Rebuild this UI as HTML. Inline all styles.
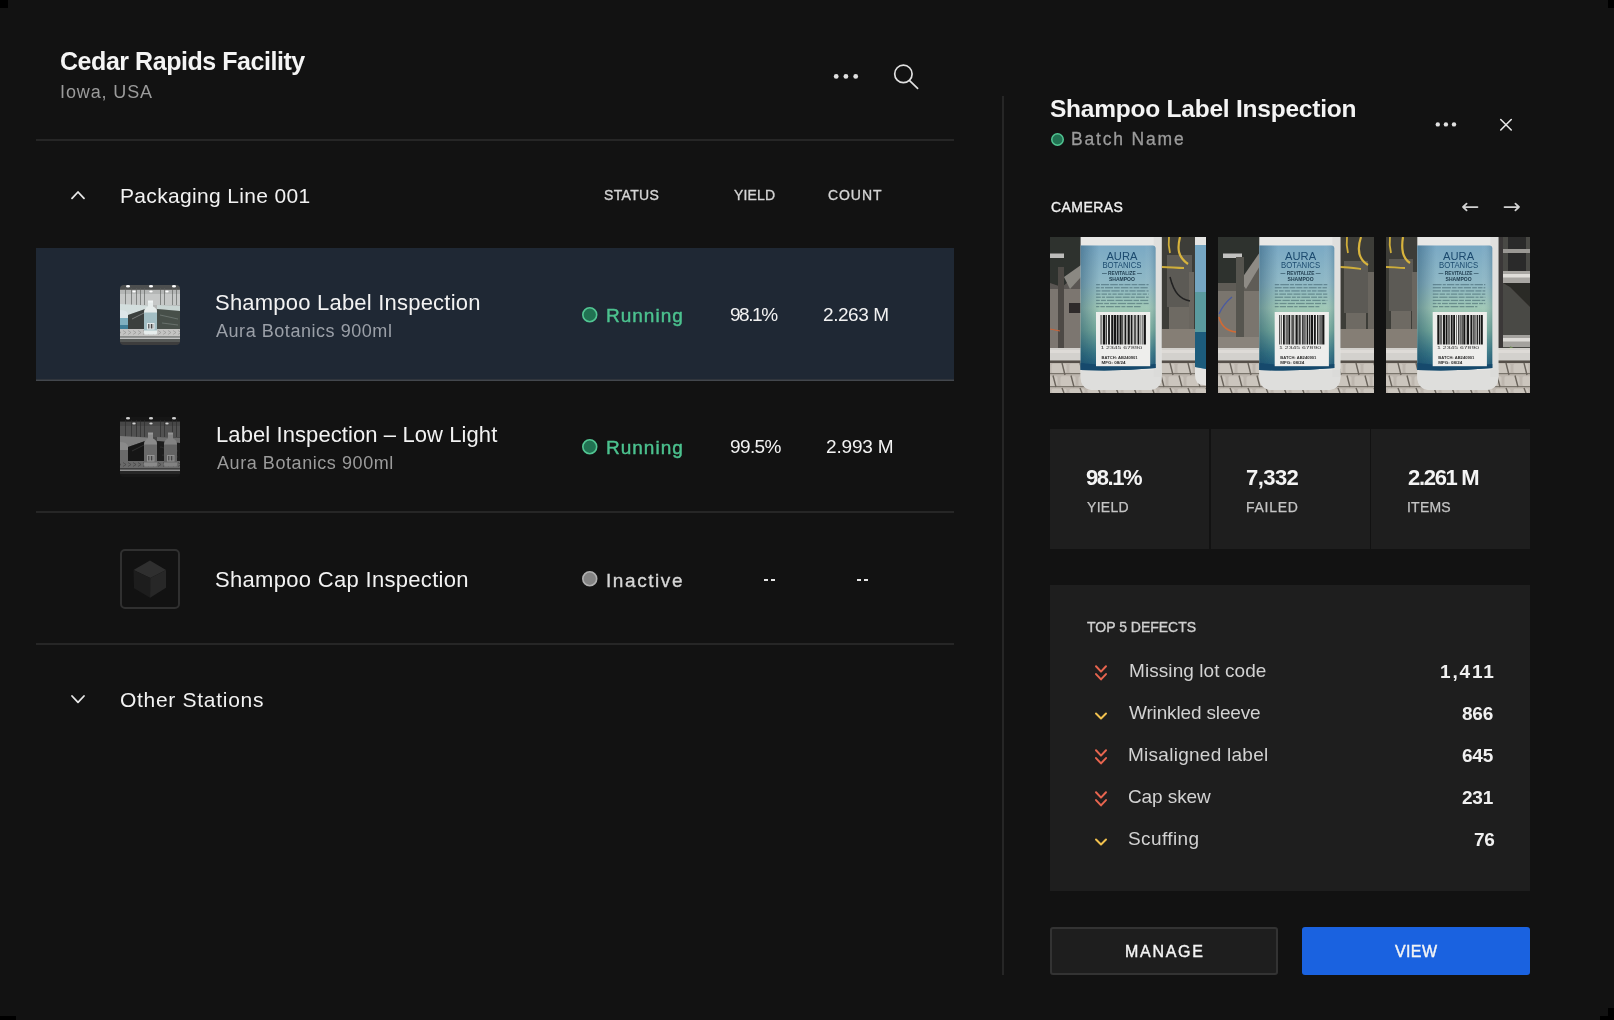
<!DOCTYPE html>
<html><head><meta charset="utf-8"><title>Cedar Rapids Facility</title>
<style>
html,body{margin:0;padding:0;}
body{width:1614px;height:1020px;overflow:hidden;background:#121212;position:relative;font-family:"Liberation Sans",sans-serif;}
.a{position:absolute;}
.t{position:absolute;white-space:nowrap;will-change:transform;}
</style></head><body>
<div class="a" style="left:0;top:0;width:8px;height:8px;background:#000"></div>
<div class="a" style="left:1608px;top:0;width:6px;height:8px;background:#000"></div>
<div class="a" style="left:0;top:1016px;width:16px;height:4px;background:#000"></div>
<div class="a" style="left:1608px;top:1008px;width:6px;height:12px;background:#000"></div>
<div class="a" style="left:1600px;top:1016px;width:14px;height:4px;background:#000"></div>
<div class="t" style="left:60.0px;top:48.5px;font-size:25px;line-height:25px;font-weight:700;letter-spacing:-0.45px;color:#f4f4f4;">Cedar Rapids Facility</div>
<div class="t" style="left:60.0px;top:82.5px;font-size:18px;line-height:18px;font-weight:400;letter-spacing:0.875px;color:#9b9b9b;">Iowa, USA</div>
<svg class="a" style="left:826px;top:66px" width="40" height="20" viewBox="0 0 40 20"><circle cx="10.2" cy="10.4" r="2.4" fill="#e0e0e0"/><circle cx="19.9" cy="10.4" r="2.4" fill="#e0e0e0"/><circle cx="29.7" cy="10.4" r="2.4" fill="#e0e0e0"/></svg>
<svg class="a" style="left:886px;top:56px" width="40" height="40" viewBox="0 0 40 40"><circle cx="17.4" cy="17.9" r="8.7" stroke="#e0e0e0" stroke-width="1.7" fill="none"/><path d="M23.6 24.6 L31.6 32.3" stroke="#e0e0e0" stroke-width="1.7" stroke-linecap="round"/></svg>
<div class="a" style="left:36px;top:139px;width:918px;height:2px;background:#262626"></div>
<svg class="a" style="left:66px;top:186px" width="24" height="18" viewBox="0 0 24 18"><path d="M6 12.3 L12 6 L18 12.3" stroke="#e8e8e8" stroke-width="1.8" fill="none" stroke-linecap="round" stroke-linejoin="round"/></svg>
<div class="t" style="left:120.2px;top:184.8px;font-size:21px;line-height:21px;font-weight:400;letter-spacing:0.33px;color:#f2f2f2;">Packaging Line 001</div>
<div class="t" style="left:603.7px;top:187.6px;font-size:14px;line-height:14px;font-weight:400;letter-spacing:0.34px;color:#d4d4d4;-webkit-text-stroke:0.35px #d4d4d4;">STATUS</div>
<div class="t" style="left:733.5px;top:187.6px;font-size:14px;line-height:14px;font-weight:400;letter-spacing:0.175px;color:#d4d4d4;-webkit-text-stroke:0.35px #d4d4d4;">YIELD</div>
<div class="t" style="left:828.3px;top:187.6px;font-size:14px;line-height:14px;font-weight:400;letter-spacing:0.925px;color:#d4d4d4;-webkit-text-stroke:0.35px #d4d4d4;">COUNT</div>
<div class="a" style="left:36px;top:248px;width:918px;height:131px;background:#1f2834"></div>
<div class="a" style="left:36px;top:379px;width:918px;height:1px;background:#30353c"></div>
<div class="a" style="left:36px;top:380px;width:918px;height:1px;background:#43474d"></div>
<div class="a" style="left:36px;top:511px;width:918px;height:2px;background:#262626"></div>
<div class="a" style="left:36px;top:643px;width:918px;height:2px;background:#262626"></div>
<div class="a" style="left:120px;top:285px;width:60px;height:60px;border-radius:4px;overflow:hidden"><svg width="60" height="60" viewBox="0 0 60 60" style="display:block"><defs><filter id="tb1" x="0" y="0" width="1" height="1"><feGaussianBlur stdDeviation="0.35"/></filter><linearGradient id="tb1g" x1="0" y1="0" x2="0" y2="1"><stop offset="0" stop-color="#5e6a6a"/><stop offset="1" stop-color="#2e3432"/></linearGradient></defs><g filter="url(#tb1)"><rect width="60" height="60" fill="#b4b6b5"/><rect x="0" y="0" width="60" height="4.5" fill="#4e5050"/><rect x="0" y="9" width="60" height="11" fill="#d2d4d3" opacity="0.6"/><rect x="5" y="3" width="0.9" height="17" fill="#5a5c5b" opacity="0.7"/><rect x="11" y="3" width="0.9" height="17" fill="#5a5c5b" opacity="0.7"/><rect x="16" y="3" width="0.9" height="17" fill="#5a5c5b" opacity="0.7"/><rect x="20" y="3" width="0.9" height="17" fill="#5a5c5b" opacity="0.7"/><rect x="24" y="3" width="0.9" height="17" fill="#5a5c5b" opacity="0.7"/><rect x="40" y="3" width="0.9" height="17" fill="#5a5c5b" opacity="0.7"/><rect x="44" y="3" width="0.9" height="17" fill="#5a5c5b" opacity="0.7"/><rect x="52" y="3" width="0.9" height="17" fill="#5a5c5b" opacity="0.7"/><rect x="56" y="3" width="0.9" height="17" fill="#5a5c5b" opacity="0.7"/><rect x="0" y="4" width="60" height="0.8" fill="#5a5c5b"/><ellipse cx="8" cy="1.2" rx="2.08" ry="1.2800000000000002" fill="#ffffff"/><ellipse cx="31" cy="1.2" rx="2.08" ry="1.2800000000000002" fill="#ffffff"/><ellipse cx="54" cy="1.2" rx="2.08" ry="1.2800000000000002" fill="#ffffff"/><ellipse cx="14" cy="6.5" rx="1.6900000000000002" ry="1.04" fill="#ffffff"/><ellipse cx="31" cy="6.5" rx="1.6900000000000002" ry="1.04" fill="#ffffff"/><ellipse cx="47" cy="6.5" rx="1.6900000000000002" ry="1.04" fill="#ffffff"/><path d="M0 19 L28 20.5 L28 23 L8 30 L0 33 Z" fill="#d3dedd"/><path d="M37 20 L60 21 L60 26 L37 24 Z" fill="#c9d5d3"/><path d="M0 33 L8 30 L28 23 L28 44 L0 44 Z" fill="#3a403e"/><path d="M37 24 L60 26 L60 44 L37 44 Z" fill="#46504a"/><path d="M12 34 L26 27" stroke="#b4b6b5" stroke-width="1" opacity="0.5"/><path d="M40 30 L58 34 M42 38 L58 40" stroke="#b4b6b5" stroke-width="0.8" opacity="0.4"/><path d="M0 25 Q7 25 8 29 V48 H0 Z" fill="#dde6e8"/><rect x="0" y="33" width="8" height="13" fill="#7fb0c0"/><rect x="0" y="40" width="8" height="6" fill="#3f7f98"/><rect x="0" y="44" width="60" height="7.5" fill="#c4c4c2"/><path d="M-2 45.5 L1 47.5 L-2 49.5" stroke="#7a7a78" stroke-width="0.6" opacity="0.7" fill="none"/><path d="M3 45.5 L6 47.5 L3 49.5" stroke="#7a7a78" stroke-width="0.6" opacity="0.7" fill="none"/><path d="M8 45.5 L11 47.5 L8 49.5" stroke="#7a7a78" stroke-width="0.6" opacity="0.7" fill="none"/><path d="M13 45.5 L16 47.5 L13 49.5" stroke="#7a7a78" stroke-width="0.6" opacity="0.7" fill="none"/><path d="M18 45.5 L21 47.5 L18 49.5" stroke="#7a7a78" stroke-width="0.6" opacity="0.7" fill="none"/><path d="M23 45.5 L26 47.5 L23 49.5" stroke="#7a7a78" stroke-width="0.6" opacity="0.7" fill="none"/><path d="M28 45.5 L31 47.5 L28 49.5" stroke="#7a7a78" stroke-width="0.6" opacity="0.7" fill="none"/><path d="M33 45.5 L36 47.5 L33 49.5" stroke="#7a7a78" stroke-width="0.6" opacity="0.7" fill="none"/><path d="M38 45.5 L41 47.5 L38 49.5" stroke="#7a7a78" stroke-width="0.6" opacity="0.7" fill="none"/><path d="M43 45.5 L46 47.5 L43 49.5" stroke="#7a7a78" stroke-width="0.6" opacity="0.7" fill="none"/><path d="M48 45.5 L51 47.5 L48 49.5" stroke="#7a7a78" stroke-width="0.6" opacity="0.7" fill="none"/><path d="M53 45.5 L56 47.5 L53 49.5" stroke="#7a7a78" stroke-width="0.6" opacity="0.7" fill="none"/><path d="M58 45.5 L61 47.5 L58 49.5" stroke="#7a7a78" stroke-width="0.6" opacity="0.7" fill="none"/><path d="M28 16 H33 V21.5 Q37 23 37 27 V48 Q37 49.5 35.5 49.5 H25.5 Q24 49.5 24 48 V27 Q24 23 28 21.5 Z" fill="#e6eceb"/><rect x="28" y="15.5" width="5" height="2" fill="#f0f4f4"/><rect x="24" y="27.5" width="13" height="18" fill="#a3bfc4"/><rect x="27" y="38" width="7.5" height="6.5" fill="#e4eaea"/><rect x="28" y="39" width="0.8" height="4.5" fill="#444"/><rect x="29.6" y="39" width="0.6" height="4.5" fill="#444"/><rect x="31" y="39" width="1" height="4.5" fill="#444"/><rect x="32.6" y="39" width="0.6" height="4.5" fill="#444"/><rect x="0" y="51.5" width="60" height="8.5" fill="#555856"/><rect x="0" y="52.5" width="60" height="1.4" fill="#cfd0cf"/><rect x="0" y="57" width="60" height="3" fill="#2c2c2c" opacity="0.6"/></g></svg></div>
<div class="t" style="left:215.4px;top:292.2px;font-size:22px;line-height:22px;font-weight:400;letter-spacing:0.213px;color:#f2f2f2;">Shampoo Label Inspection</div>
<div class="t" style="left:216.4px;top:321.6px;font-size:18px;line-height:18px;font-weight:400;letter-spacing:0.545px;color:#9ba0a8;">Aura Botanics 900ml</div>
<svg class="a" style="left:579.75px;top:305.25px" width="19.5" height="19.5" viewBox="0 0 19.5 19.5"><circle cx="9.75" cy="9.75" r="6.95" fill="#217252" stroke="#52c693" stroke-width="1.6"/></svg>
<div class="t" style="left:606.0px;top:305.8px;font-size:19px;line-height:19px;font-weight:400;letter-spacing:1.0px;color:#4cc28f;-webkit-text-stroke:0.45px #4cc28f;">Running</div>
<div class="t" style="left:730.2px;top:305.4px;font-size:19px;line-height:19px;font-weight:400;letter-spacing:-1.45px;color:#f2f2f2;">98.1%</div>
<div class="t" style="left:823.4px;top:305.4px;font-size:19px;line-height:19px;font-weight:400;letter-spacing:-0.433px;color:#f2f2f2;">2.263 M</div>
<div class="a" style="left:120px;top:417px;width:60px;height:60px;border-radius:4px;overflow:hidden"><svg width="60" height="60" viewBox="0 0 60 60" style="display:block"><defs><filter id="tb2" x="0" y="0" width="1" height="1"><feGaussianBlur stdDeviation="0.35"/></filter><linearGradient id="tb2g" x1="0" y1="0" x2="0" y2="1"><stop offset="0" stop-color="#2a2a2a"/><stop offset="1" stop-color="#121212"/></linearGradient></defs><g filter="url(#tb2)"><rect width="60" height="60" fill="#464646"/><rect x="0" y="0" width="60" height="4.5" fill="#161616"/><rect x="0" y="9" width="60" height="11" fill="#585858" opacity="0.6"/><rect x="5" y="3" width="0.9" height="17" fill="#2a2a2a" opacity="0.7"/><rect x="11" y="3" width="0.9" height="17" fill="#2a2a2a" opacity="0.7"/><rect x="16" y="3" width="0.9" height="17" fill="#2a2a2a" opacity="0.7"/><rect x="20" y="3" width="0.9" height="17" fill="#2a2a2a" opacity="0.7"/><rect x="24" y="3" width="0.9" height="17" fill="#2a2a2a" opacity="0.7"/><rect x="40" y="3" width="0.9" height="17" fill="#2a2a2a" opacity="0.7"/><rect x="44" y="3" width="0.9" height="17" fill="#2a2a2a" opacity="0.7"/><rect x="52" y="3" width="0.9" height="17" fill="#2a2a2a" opacity="0.7"/><rect x="56" y="3" width="0.9" height="17" fill="#2a2a2a" opacity="0.7"/><rect x="0" y="4" width="60" height="0.8" fill="#2a2a2a"/><ellipse cx="8" cy="1.2" rx="2.08" ry="1.2800000000000002" fill="#d0d0d0"/><ellipse cx="31" cy="1.2" rx="2.08" ry="1.2800000000000002" fill="#d0d0d0"/><ellipse cx="54" cy="1.2" rx="2.08" ry="1.2800000000000002" fill="#d0d0d0"/><ellipse cx="14" cy="6.5" rx="1.6900000000000002" ry="1.04" fill="#d0d0d0"/><ellipse cx="31" cy="6.5" rx="1.6900000000000002" ry="1.04" fill="#d0d0d0"/><ellipse cx="47" cy="6.5" rx="1.6900000000000002" ry="1.04" fill="#d0d0d0"/><path d="M0 19 L28 20.5 L28 23 L8 30 L0 33 Z" fill="#7e7e7e"/><path d="M37 20 L60 21 L60 26 L37 24 Z" fill="#6e6e6e"/><path d="M0 33 L8 30 L28 23 L28 44 L0 44 Z" fill="#181818"/><path d="M37 24 L60 26 L60 44 L37 44 Z" fill="#1e1e1e"/><path d="M12 34 L26 27" stroke="#464646" stroke-width="1" opacity="0.5"/><path d="M40 30 L58 34 M42 38 L58 40" stroke="#464646" stroke-width="0.8" opacity="0.4"/><path d="M0 25 Q7 25 8 29 V48 H0 Z" fill="#8a8a8a"/><rect x="0" y="33" width="8" height="13" fill="#6a6a6a"/><rect x="0" y="44" width="60" height="7.5" fill="#6a6a6a"/><path d="M-2 45.5 L1 47.5 L-2 49.5" stroke="#2e2e2e" stroke-width="0.6" opacity="0.7" fill="none"/><path d="M3 45.5 L6 47.5 L3 49.5" stroke="#2e2e2e" stroke-width="0.6" opacity="0.7" fill="none"/><path d="M8 45.5 L11 47.5 L8 49.5" stroke="#2e2e2e" stroke-width="0.6" opacity="0.7" fill="none"/><path d="M13 45.5 L16 47.5 L13 49.5" stroke="#2e2e2e" stroke-width="0.6" opacity="0.7" fill="none"/><path d="M18 45.5 L21 47.5 L18 49.5" stroke="#2e2e2e" stroke-width="0.6" opacity="0.7" fill="none"/><path d="M23 45.5 L26 47.5 L23 49.5" stroke="#2e2e2e" stroke-width="0.6" opacity="0.7" fill="none"/><path d="M28 45.5 L31 47.5 L28 49.5" stroke="#2e2e2e" stroke-width="0.6" opacity="0.7" fill="none"/><path d="M33 45.5 L36 47.5 L33 49.5" stroke="#2e2e2e" stroke-width="0.6" opacity="0.7" fill="none"/><path d="M38 45.5 L41 47.5 L38 49.5" stroke="#2e2e2e" stroke-width="0.6" opacity="0.7" fill="none"/><path d="M43 45.5 L46 47.5 L43 49.5" stroke="#2e2e2e" stroke-width="0.6" opacity="0.7" fill="none"/><path d="M48 45.5 L51 47.5 L48 49.5" stroke="#2e2e2e" stroke-width="0.6" opacity="0.7" fill="none"/><path d="M53 45.5 L56 47.5 L53 49.5" stroke="#2e2e2e" stroke-width="0.6" opacity="0.7" fill="none"/><path d="M58 45.5 L61 47.5 L58 49.5" stroke="#2e2e2e" stroke-width="0.6" opacity="0.7" fill="none"/><path d="M28 16 H33 V21.5 Q37 23 37 27 V48 Q37 49.5 35.5 49.5 H25.5 Q24 49.5 24 48 V27 Q24 23 28 21.5 Z" fill="#8a8a8a"/><rect x="28" y="15.5" width="5" height="2" fill="#9a9a9a"/><rect x="24" y="27.5" width="13" height="18" fill="#6a6a6a"/><rect x="27" y="38" width="7.5" height="6.5" fill="#959595"/><rect x="28" y="39" width="0.8" height="4.5" fill="#444"/><rect x="29.6" y="39" width="0.6" height="4.5" fill="#444"/><rect x="31" y="39" width="1" height="4.5" fill="#444"/><rect x="32.6" y="39" width="0.6" height="4.5" fill="#444"/><path d="M48 16 H53 V21.5 Q57 23 57 27 V48 Q57 49.5 55.5 49.5 H45.5 Q44 49.5 44 48 V27 Q44 23 48 21.5 Z" fill="#828282"/><rect x="48" y="15.5" width="5" height="2" fill="#949494"/><rect x="44" y="27.5" width="13" height="18" fill="#646464"/><rect x="47" y="38" width="7.5" height="6.5" fill="#8e8e8e"/><rect x="48" y="39" width="0.8" height="4.5" fill="#444"/><rect x="49.6" y="39" width="0.6" height="4.5" fill="#444"/><rect x="51" y="39" width="1" height="4.5" fill="#444"/><rect x="52.6" y="39" width="0.6" height="4.5" fill="#444"/><rect x="0" y="51.5" width="60" height="8.5" fill="#262626"/><rect x="0" y="52.5" width="60" height="1.4" fill="#9a9a9a"/><rect x="0" y="57" width="60" height="3" fill="#111111" opacity="0.6"/></g></svg></div>
<div class="t" style="left:216.0px;top:424.2px;font-size:22px;line-height:22px;font-weight:400;letter-spacing:0.09px;color:#f2f2f2;">Label Inspection – Low Light</div>
<div class="t" style="left:216.6px;top:453.8px;font-size:18px;line-height:18px;font-weight:400;letter-spacing:0.567px;color:#9b9b9b;">Aura Botanics 900ml</div>
<svg class="a" style="left:579.75px;top:437.25px" width="19.5" height="19.5" viewBox="0 0 19.5 19.5"><circle cx="9.75" cy="9.75" r="6.95" fill="#217252" stroke="#52c693" stroke-width="1.6"/></svg>
<div class="t" style="left:606.0px;top:437.8px;font-size:19px;line-height:19px;font-weight:400;letter-spacing:1.0px;color:#4cc28f;-webkit-text-stroke:0.45px #4cc28f;">Running</div>
<div class="t" style="left:729.5px;top:437.4px;font-size:19px;line-height:19px;font-weight:400;letter-spacing:-0.625px;color:#f2f2f2;">99.5%</div>
<div class="t" style="left:826.0px;top:437.4px;font-size:19px;line-height:19px;font-weight:400;letter-spacing:-0.167px;color:#f2f2f2;">2.993 M</div>
<div class="a" style="left:120px;top:549px;width:60px;height:60px;border-radius:5px;box-sizing:border-box;border:2px solid #303030"></div>
<svg class="a" style="left:120px;top:549px" width="60" height="60" viewBox="0 0 60 60"><path d="M30 11.5 L46 21 L30.3 29 L13.5 21 Z" fill="#2f2f2f"/><path d="M13.5 21 L30.3 29 L30.1 48.7 L14 39.3 Z" fill="#1d1d1d"/><path d="M46 21 L46 38.7 L30.1 48.7 L30.3 29 Z" fill="#272727"/></svg>
<div class="t" style="left:215.4px;top:569.2px;font-size:22px;line-height:22px;font-weight:400;letter-spacing:0.31px;color:#f2f2f2;">Shampoo Cap Inspection</div>
<svg class="a" style="left:579.75px;top:569.45px" width="19.5" height="19.5" viewBox="0 0 19.5 19.5"><circle cx="9.75" cy="9.75" r="6.95" fill="#838383" stroke="#b0b0b0" stroke-width="1.6"/></svg>
<div class="t" style="left:606.0px;top:570.6px;font-size:19px;line-height:19px;font-weight:400;letter-spacing:1.571px;color:#d6d6d6;-webkit-text-stroke:0.35px #d6d6d6;">Inactive</div>
<div class="a" style="left:763.5px;top:579px;width:4.7px;height:2px;background:#e6e6e6"></div>
<div class="a" style="left:770.5px;top:579px;width:4.7px;height:2px;background:#e6e6e6"></div>
<div class="a" style="left:856.5px;top:579px;width:4.7px;height:2px;background:#e6e6e6"></div>
<div class="a" style="left:863.5px;top:579px;width:4.7px;height:2px;background:#e6e6e6"></div>
<svg class="a" style="left:66px;top:690px" width="24" height="18" viewBox="0 0 24 18"><path d="M6 6 L12 12.3 L18 6" stroke="#e8e8e8" stroke-width="1.8" fill="none" stroke-linecap="round" stroke-linejoin="round"/></svg>
<div class="t" style="left:119.7px;top:689.4px;font-size:21px;line-height:21px;font-weight:400;letter-spacing:0.708px;color:#f2f2f2;">Other Stations</div>
<div class="a" style="left:1002px;top:96px;width:2px;height:879px;background:#262626"></div>
<div class="t" style="left:1049.6px;top:96.8px;font-size:24.5px;line-height:24.5px;font-weight:700;letter-spacing:-0.23px;color:#f4f4f4;">Shampoo Label Inspection</div>
<svg class="a" style="left:1049.10px;top:131.00px" width="17" height="17" viewBox="0 0 17 17"><circle cx="8.5" cy="8.5" r="5.75" fill="#217252" stroke="#52c693" stroke-width="1.5"/></svg>
<div class="t" style="left:1071.3px;top:131.3px;font-size:17.5px;line-height:17.5px;font-weight:400;letter-spacing:1.823px;color:#9b9b9b;-webkit-text-stroke:0.3px #9b9b9b;">Batch Name</div>
<svg class="a" style="left:1426px;top:114px" width="40" height="20" viewBox="0 0 40 20"><circle cx="11.8" cy="10.4" r="2.2" fill="#e0e0e0"/><circle cx="19.9" cy="10.4" r="2.2" fill="#e0e0e0"/><circle cx="28" cy="10.4" r="2.2" fill="#e0e0e0"/></svg>
<svg class="a" style="left:1494px;top:113px" width="24" height="24" viewBox="0 0 24 24"><path d="M6.75 6.5 L17.25 17 M17.25 6.5 L6.75 17" stroke="#e6e6e6" stroke-width="1.6" stroke-linecap="round"/></svg>
<div class="t" style="left:1050.5px;top:199.8px;font-size:14px;line-height:14px;font-weight:400;letter-spacing:0.449px;color:#f0f0f0;-webkit-text-stroke:0.35px #f0f0f0;">CAMERAS</div>
<svg class="a" style="left:1456px;top:197px" width="28" height="20" viewBox="0 0 28 20"><path d="M7 10 L21.5 10 M10.6 6.6 L7 10 L10.6 13.4" stroke="#d2d2d2" stroke-width="1.75" fill="none" stroke-linecap="round" stroke-linejoin="round"/></svg>
<svg class="a" style="left:1498px;top:197px" width="28" height="20" viewBox="0 0 28 20"><path d="M6.5 10 L21 10 M17.4 6.6 L21 10 L17.4 13.4" stroke="#d2d2d2" stroke-width="1.75" fill="none" stroke-linecap="round" stroke-linejoin="round"/></svg>
<div class="a" style="left:1050px;top:237px;width:156px;height:156px;overflow:hidden"><svg width="156" height="156" viewBox="0 0 156 156" style="display:block"><defs><linearGradient id="lg0" x1="0" y1="0" x2="0" y2="1"><stop offset="0" stop-color="#7aa9c4"/><stop offset="0.3" stop-color="#90b9c6"/><stop offset="0.5" stop-color="#a0c8b6"/><stop offset="0.68" stop-color="#78ad9e"/><stop offset="0.86" stop-color="#3a7a88"/><stop offset="1" stop-color="#1c5578"/></linearGradient><linearGradient id="lh0" x1="0" y1="0" x2="1" y2="0"><stop offset="0" stop-color="#0e3a5a" stop-opacity="0.38"/><stop offset="0.25" stop-color="#0e3a5a" stop-opacity="0"/><stop offset="0.85" stop-color="#ffffff" stop-opacity="0"/><stop offset="1" stop-color="#0e3a5a" stop-opacity="0.2"/></linearGradient><filter id="bl0" x="0" y="0" width="1" height="1"><feGaussianBlur stdDeviation="0.45"/></filter></defs><g filter="url(#bl0)"><rect width="156" height="156" fill="#3a3937"/><rect x="0" y="0" width="31" height="112" fill="#5a5752"/><path d="M0 0 H31 V34 L12 50 L0 46 Z" fill="#2e302e"/><rect x="0" y="16.5" width="14" height="4.5" fill="#bdbdbb"/><path d="M14 40 L31 28 V40 L20 52 Z" fill="#8a8882"/><rect x="0" y="52" width="31" height="59" fill="#7b766f"/><rect x="8" y="30" width="6" height="81" fill="#4d4a45"/><rect x="19" y="66" width="12" height="10" fill="#2e2c2a"/><path d="M0 92 L10 94" stroke="#c8643a" stroke-width="1.2"/><rect x="112" y="0" width="33" height="112" fill="#3e3d39"/><rect x="117" y="18" width="25" height="52" fill="#5c5a55"/><rect x="119" y="70" width="20" height="22" fill="#6e6a64"/><rect x="139" y="35" width="5" height="76" fill="#6a665f"/><rect x="112" y="92" width="33" height="19" fill="#857e75"/><path d="M130 0 C127 12 128 20 138 27" stroke="#d8b43c" stroke-width="2.2" fill="none"/><path d="M119 0 C118 8 119 12 120 16" stroke="#cfae3a" stroke-width="1.8" fill="none"/><path d="M112 30 C120 30 126 31 134 31" stroke="#cfae3a" stroke-width="1.8" fill="none"/><path d="M120 40 C124 56 130 62 140 64" stroke="#222" stroke-width="1.5" fill="none"/><rect x="0" y="111" width="156" height="45" fill="#bdb6ae"/><rect x="0" y="111" width="156" height="12.5" fill="#d3d1cd"/><rect x="0" y="113" width="156" height="3" fill="#e2e0dc" opacity="0.7"/><rect x="0" y="123.5" width="156" height="2.5" fill="#55504a"/><rect x="-16.5" y="126.8" width="15" height="9.2" rx="1.5" fill="#cbc5bd"/><rect x="1.5" y="126.8" width="15" height="9.2" rx="1.5" fill="#cbc5bd"/><rect x="19.5" y="126.8" width="15" height="9.2" rx="1.5" fill="#cbc5bd"/><rect x="37.5" y="126.8" width="15" height="9.2" rx="1.5" fill="#cbc5bd"/><rect x="55.5" y="126.8" width="15" height="9.2" rx="1.5" fill="#cbc5bd"/><rect x="73.5" y="126.8" width="15" height="9.2" rx="1.5" fill="#cbc5bd"/><rect x="91.5" y="126.8" width="15" height="9.2" rx="1.5" fill="#cbc5bd"/><rect x="109.5" y="126.8" width="15" height="9.2" rx="1.5" fill="#cbc5bd"/><rect x="127.5" y="126.8" width="15" height="9.2" rx="1.5" fill="#cbc5bd"/><rect x="145.5" y="126.8" width="15" height="9.2" rx="1.5" fill="#cbc5bd"/><rect x="163.5" y="126.8" width="15" height="9.2" rx="1.5" fill="#cbc5bd"/><rect x="0" y="136" width="156" height="1.2" fill="#7a746c"/><rect x="-7.5" y="139.3" width="15" height="9.7" rx="1.5" fill="#cbc5bd"/><rect x="10.5" y="139.3" width="15" height="9.7" rx="1.5" fill="#cbc5bd"/><rect x="28.5" y="139.3" width="15" height="9.7" rx="1.5" fill="#cbc5bd"/><rect x="46.5" y="139.3" width="15" height="9.7" rx="1.5" fill="#cbc5bd"/><rect x="64.5" y="139.3" width="15" height="9.7" rx="1.5" fill="#cbc5bd"/><rect x="82.5" y="139.3" width="15" height="9.7" rx="1.5" fill="#cbc5bd"/><rect x="100.5" y="139.3" width="15" height="9.7" rx="1.5" fill="#cbc5bd"/><rect x="118.5" y="139.3" width="15" height="9.7" rx="1.5" fill="#cbc5bd"/><rect x="136.5" y="139.3" width="15" height="9.7" rx="1.5" fill="#cbc5bd"/><rect x="154.5" y="139.3" width="15" height="9.7" rx="1.5" fill="#cbc5bd"/><rect x="172.5" y="139.3" width="15" height="9.7" rx="1.5" fill="#cbc5bd"/><rect x="0" y="149.0" width="156" height="1.2" fill="#7a746c"/><rect x="-16.5" y="151.8" width="15" height="4.2" rx="1.5" fill="#cbc5bd"/><rect x="1.5" y="151.8" width="15" height="4.2" rx="1.5" fill="#cbc5bd"/><rect x="19.5" y="151.8" width="15" height="4.2" rx="1.5" fill="#cbc5bd"/><rect x="37.5" y="151.8" width="15" height="4.2" rx="1.5" fill="#cbc5bd"/><rect x="55.5" y="151.8" width="15" height="4.2" rx="1.5" fill="#cbc5bd"/><rect x="73.5" y="151.8" width="15" height="4.2" rx="1.5" fill="#cbc5bd"/><rect x="91.5" y="151.8" width="15" height="4.2" rx="1.5" fill="#cbc5bd"/><rect x="109.5" y="151.8" width="15" height="4.2" rx="1.5" fill="#cbc5bd"/><rect x="127.5" y="151.8" width="15" height="4.2" rx="1.5" fill="#cbc5bd"/><rect x="145.5" y="151.8" width="15" height="4.2" rx="1.5" fill="#cbc5bd"/><rect x="163.5" y="151.8" width="15" height="4.2" rx="1.5" fill="#cbc5bd"/><rect x="0" y="156" width="156" height="1.2" fill="#7a746c"/><path d="M-6 126 L-3 138 M3 138.5 L6 150 M-6 151 L-4 156" stroke="#6a645c" stroke-width="1.4"/><path d="M12 126 L15 138 M21 138.5 L24 150 M12 151 L14 156" stroke="#6a645c" stroke-width="1.4"/><path d="M30 126 L33 138 M39 138.5 L42 150 M30 151 L32 156" stroke="#6a645c" stroke-width="1.4"/><path d="M48 126 L51 138 M57 138.5 L60 150 M48 151 L50 156" stroke="#6a645c" stroke-width="1.4"/><path d="M66 126 L69 138 M75 138.5 L78 150 M66 151 L68 156" stroke="#6a645c" stroke-width="1.4"/><path d="M84 126 L87 138 M93 138.5 L96 150 M84 151 L86 156" stroke="#6a645c" stroke-width="1.4"/><path d="M102 126 L105 138 M111 138.5 L114 150 M102 151 L104 156" stroke="#6a645c" stroke-width="1.4"/><path d="M120 126 L123 138 M129 138.5 L132 150 M120 151 L122 156" stroke="#6a645c" stroke-width="1.4"/><path d="M138 126 L141 138 M147 138.5 L150 150 M138 151 L140 156" stroke="#6a645c" stroke-width="1.4"/><path d="M156 126 L159 138 M165 138.5 L168 150 M156 151 L158 156" stroke="#6a645c" stroke-width="1.4"/><path d="M145 0 H156 V148 H154 Q145 148 145 138 Z" fill="#e4e4e2"/><path d="M145 8 H156 V132 L145 130 Z" fill="#74a6c2"/><path d="M145 55 H156 V95 H145 Z" fill="#5a9a9e"/><path d="M145 95 H156 V132 L145 130 Z" fill="#1f5c7c"/><path d="M30.6 0 H111.69999999999999 V138 Q111.69999999999999 153 97.69999999999999 153 H44.6 Q30.6 153 30.6 138 Z" fill="#e8e8e6"/><path d="M30.6 133 H111.69999999999999 V140 Q111.69999999999999 153 97.69999999999999 153 H44.6 Q30.6 153 30.6 140 Z" fill="#dededc"/><rect x="103.69999999999999" y="0" width="8" height="140" fill="#d9d9d7" opacity="0.6"/><path d="M30.6 8.4 H102.6 Q105.6 8.4 105.6 11.5 V131 Q70.6 134.5 30.6 133 Z" fill="url(#lg0)"/><path d="M30.6 8.4 H102.6 Q105.6 8.4 105.6 11.5 V131 Q70.6 134.5 30.6 133 Z" fill="url(#lh0)"/><path d="M30.6 126 Q70.6 131 105.6 127 V131 Q70.6 134.5 30.6 133 Z" fill="#164a6c"/><text x="71.9" y="23" font-family="Liberation Sans" font-size="11.8" fill="#1b4a6e" text-anchor="middle" textLength="31" lengthAdjust="spacingAndGlyphs">AURA</text><text x="71.9" y="31.4" font-family="Liberation Sans" font-size="9.4" fill="#1b4a6e" text-anchor="middle" textLength="39" lengthAdjust="spacingAndGlyphs">BOTANICS</text><text x="71.9" y="38.4" font-family="Liberation Sans" font-weight="700" font-size="4.6" fill="#1d3a4c" text-anchor="middle" textLength="40" lengthAdjust="spacingAndGlyphs">— REVITALIZE —</text><text x="71.9" y="43.8" font-family="Liberation Sans" font-weight="700" font-size="4.6" fill="#1d3a4c" text-anchor="middle" textLength="26" lengthAdjust="spacingAndGlyphs">SHAMPOO</text><rect x="46.1" y="47.0" width="3.8" height="1.25" fill="#22404e" opacity="0.42"/><rect x="51.0" y="47.0" width="8.1" height="1.25" fill="#22404e" opacity="0.42"/><rect x="60.2" y="47.0" width="7.6" height="1.25" fill="#22404e" opacity="0.42"/><rect x="68.9" y="47.0" width="4.5" height="1.25" fill="#22404e" opacity="0.42"/><rect x="74.5" y="47.0" width="6.0" height="1.25" fill="#22404e" opacity="0.42"/><rect x="81.6" y="47.0" width="5.7" height="1.25" fill="#22404e" opacity="0.42"/><rect x="88.4" y="47.0" width="6.9" height="1.25" fill="#22404e" opacity="0.42"/><rect x="96.4" y="47.0" width="2.2" height="1.25" fill="#22404e" opacity="0.42"/><rect x="46.1" y="50.1" width="3.6" height="1.25" fill="#22404e" opacity="0.42"/><rect x="50.8" y="50.1" width="3.2" height="1.25" fill="#22404e" opacity="0.42"/><rect x="55.0" y="50.1" width="8.0" height="1.25" fill="#22404e" opacity="0.42"/><rect x="64.1" y="50.1" width="5.6" height="1.25" fill="#22404e" opacity="0.42"/><rect x="70.8" y="50.1" width="7.6" height="1.25" fill="#22404e" opacity="0.42"/><rect x="79.5" y="50.1" width="3.0" height="1.25" fill="#22404e" opacity="0.42"/><rect x="83.6" y="50.1" width="5.7" height="1.25" fill="#22404e" opacity="0.42"/><rect x="90.4" y="50.1" width="7.3" height="1.25" fill="#22404e" opacity="0.42"/><rect x="46.1" y="53.3" width="4.4" height="1.25" fill="#22404e" opacity="0.42"/><rect x="51.6" y="53.3" width="8.7" height="1.25" fill="#22404e" opacity="0.42"/><rect x="61.3" y="53.3" width="8.4" height="1.25" fill="#22404e" opacity="0.42"/><rect x="70.9" y="53.3" width="3.2" height="1.25" fill="#22404e" opacity="0.42"/><rect x="75.1" y="53.3" width="3.2" height="1.25" fill="#22404e" opacity="0.42"/><rect x="79.4" y="53.3" width="6.2" height="1.25" fill="#22404e" opacity="0.42"/><rect x="86.7" y="53.3" width="8.6" height="1.25" fill="#22404e" opacity="0.42"/><rect x="96.5" y="53.3" width="2.1" height="1.25" fill="#22404e" opacity="0.42"/><rect x="46.1" y="56.5" width="4.3" height="1.25" fill="#22404e" opacity="0.42"/><rect x="51.5" y="56.5" width="5.5" height="1.25" fill="#22404e" opacity="0.42"/><rect x="58.1" y="56.5" width="3.2" height="1.25" fill="#22404e" opacity="0.42"/><rect x="62.4" y="56.5" width="4.3" height="1.25" fill="#22404e" opacity="0.42"/><rect x="67.8" y="56.5" width="5.6" height="1.25" fill="#22404e" opacity="0.42"/><rect x="74.6" y="56.5" width="6.0" height="1.25" fill="#22404e" opacity="0.42"/><rect x="81.6" y="56.5" width="4.4" height="1.25" fill="#22404e" opacity="0.42"/><rect x="87.1" y="56.5" width="4.4" height="1.25" fill="#22404e" opacity="0.42"/><rect x="92.6" y="56.5" width="4.3" height="1.25" fill="#22404e" opacity="0.42"/><rect x="98.0" y="56.5" width="0.6" height="1.25" fill="#22404e" opacity="0.42"/><rect x="46.1" y="59.6" width="4.7" height="1.25" fill="#22404e" opacity="0.42"/><rect x="51.9" y="59.6" width="3.1" height="1.25" fill="#22404e" opacity="0.42"/><rect x="56.2" y="59.6" width="8.0" height="1.25" fill="#22404e" opacity="0.42"/><rect x="65.3" y="59.6" width="6.3" height="1.25" fill="#22404e" opacity="0.42"/><rect x="72.7" y="59.6" width="6.9" height="1.25" fill="#22404e" opacity="0.42"/><rect x="80.7" y="59.6" width="4.1" height="1.25" fill="#22404e" opacity="0.42"/><rect x="85.9" y="59.6" width="9.0" height="1.25" fill="#22404e" opacity="0.42"/><rect x="96.0" y="59.6" width="2.6" height="1.25" fill="#22404e" opacity="0.42"/><rect x="46.1" y="62.8" width="3.7" height="1.25" fill="#22404e" opacity="0.42"/><rect x="50.9" y="62.8" width="5.0" height="1.25" fill="#22404e" opacity="0.42"/><rect x="57.0" y="62.8" width="7.3" height="1.25" fill="#22404e" opacity="0.42"/><rect x="65.5" y="62.8" width="7.3" height="1.25" fill="#22404e" opacity="0.42"/><rect x="73.8" y="62.8" width="8.6" height="1.25" fill="#22404e" opacity="0.42"/><rect x="83.5" y="62.8" width="5.5" height="1.25" fill="#22404e" opacity="0.42"/><rect x="90.2" y="62.8" width="8.0" height="1.25" fill="#22404e" opacity="0.42"/><rect x="46.1" y="65.9" width="7.0" height="1.25" fill="#22404e" opacity="0.42"/><rect x="54.2" y="65.9" width="4.8" height="1.25" fill="#22404e" opacity="0.42"/><rect x="60.1" y="65.9" width="6.5" height="1.25" fill="#22404e" opacity="0.42"/><rect x="67.8" y="65.9" width="8.3" height="1.25" fill="#22404e" opacity="0.42"/><rect x="77.2" y="65.9" width="8.1" height="1.25" fill="#22404e" opacity="0.42"/><rect x="86.3" y="65.9" width="6.0" height="1.25" fill="#22404e" opacity="0.42"/><rect x="93.5" y="65.9" width="5.1" height="1.25" fill="#22404e" opacity="0.42"/><rect x="46.1" y="69.0" width="3.2" height="1.25" fill="#22404e" opacity="0.42"/><rect x="50.4" y="69.0" width="4.5" height="1.25" fill="#22404e" opacity="0.42"/><rect x="56.0" y="69.0" width="7.8" height="1.25" fill="#22404e" opacity="0.42"/><rect x="64.8" y="69.0" width="5.5" height="1.25" fill="#22404e" opacity="0.42"/><rect x="71.4" y="69.0" width="4.0" height="1.25" fill="#22404e" opacity="0.42"/><rect x="76.6" y="69.0" width="6.3" height="1.25" fill="#22404e" opacity="0.42"/><rect x="84.0" y="69.0" width="6.6" height="1.25" fill="#22404e" opacity="0.42"/><rect x="46.0" y="75" width="54.2" height="54.2" fill="#eeeeec"/><rect x="50.6" y="78" width="0.9" height="29.5" fill="#161616"/><rect x="52.8" y="78" width="2.2" height="29.5" fill="#161616"/><rect x="55.6" y="78" width="1.2" height="29.5" fill="#161616"/><rect x="58.1" y="78" width="1.8" height="29.5" fill="#161616"/><rect x="61.2" y="78" width="2.2" height="29.5" fill="#161616"/><rect x="64.0" y="78" width="2.2" height="29.5" fill="#161616"/><rect x="66.8" y="78" width="1.8" height="29.5" fill="#161616"/><rect x="69.5" y="78" width="2.2" height="29.5" fill="#161616"/><rect x="72.3" y="78" width="0.9" height="29.5" fill="#161616"/><rect x="74.5" y="78" width="1.8" height="29.5" fill="#161616"/><rect x="77.6" y="78" width="2.2" height="29.5" fill="#161616"/><rect x="80.7" y="78" width="1.8" height="29.5" fill="#161616"/><rect x="83.8" y="78" width="0.9" height="29.5" fill="#161616"/><rect x="85.3" y="78" width="0.9" height="29.5" fill="#161616"/><rect x="87.5" y="78" width="1.8" height="29.5" fill="#161616"/><rect x="90.6" y="78" width="0.6" height="29.5" fill="#161616"/><rect x="92.5" y="78" width="0.6" height="29.5" fill="#161616"/><rect x="93.7" y="78" width="2.2" height="29.5" fill="#161616"/><text x="71.4" y="112.3" font-family="Liberation Sans" font-size="3.9" fill="#333" text-anchor="middle" textLength="42" lengthAdjust="spacingAndGlyphs">1 2345 67890</text><text x="51.6" y="121.5" font-family="Liberation Sans" font-weight="700" font-size="4.2" fill="#2a2a2a" textLength="36" lengthAdjust="spacingAndGlyphs">BATCH: AB240901</text><text x="51.6" y="127" font-family="Liberation Sans" font-weight="700" font-size="4.2" fill="#2a2a2a" textLength="24" lengthAdjust="spacingAndGlyphs">MFG: 08/24</text></g></svg></div>
<div class="a" style="left:1218px;top:237px;width:156px;height:156px;overflow:hidden"><svg width="156" height="156" viewBox="0 0 156 156" style="display:block"><defs><linearGradient id="lg1" x1="0" y1="0" x2="0" y2="1"><stop offset="0" stop-color="#7aa9c4"/><stop offset="0.3" stop-color="#90b9c6"/><stop offset="0.5" stop-color="#a0c8b6"/><stop offset="0.68" stop-color="#78ad9e"/><stop offset="0.86" stop-color="#3a7a88"/><stop offset="1" stop-color="#1c5578"/></linearGradient><linearGradient id="lh1" x1="0" y1="0" x2="1" y2="0"><stop offset="0" stop-color="#0e3a5a" stop-opacity="0.38"/><stop offset="0.25" stop-color="#0e3a5a" stop-opacity="0"/><stop offset="0.85" stop-color="#ffffff" stop-opacity="0"/><stop offset="1" stop-color="#0e3a5a" stop-opacity="0.2"/></linearGradient><filter id="bl1" x="0" y="0" width="1" height="1"><feGaussianBlur stdDeviation="0.45"/></filter></defs><g filter="url(#bl1)"><rect width="156" height="156" fill="#3a3937"/><rect x="0" y="0" width="41.3" height="112" fill="#5e5b56"/><path d="M0 0 H41.3 V20 L26 46 H0 Z" fill="#2e302e"/><rect x="5" y="16.5" width="19" height="4.5" fill="#c2c2c0"/><path d="M22 44 L41.3 16 V30 L28 52 Z" fill="#8e8b85"/><rect x="0" y="54" width="41.3" height="57" fill="#7a756e"/><rect x="18" y="20" width="8" height="91" fill="#57544f"/><path d="M1 80 C3 88 8 94 18 95" stroke="#d06a36" stroke-width="1.6" fill="none"/><path d="M1 77 C4 70 9 64 14 60" stroke="#4a5aa0" stroke-width="1.3" fill="none"/><rect x="0" y="100" width="41.3" height="11" fill="#8a847b"/><rect x="122.4" y="0" width="33.6" height="112" fill="#3e3d39"/><rect x="126" y="24" width="24" height="52" fill="#5c5a55"/><rect x="128" y="76" width="20" height="16" fill="#6e6a64"/><rect x="150" y="35" width="6" height="76" fill="#6a665f"/><rect x="122.4" y="92" width="33.6" height="19" fill="#857e75"/><path d="M143 0 C139 12 140 22 150 28" stroke="#d8b43c" stroke-width="2.2" fill="none"/><path d="M129 0 C128 8 129 12 130 16" stroke="#cfae3a" stroke-width="1.8" fill="none"/><path d="M122.4 30 C130 30 136 31 143 32" stroke="#cfae3a" stroke-width="1.8" fill="none"/><rect x="0" y="111" width="156" height="45" fill="#bdb6ae"/><rect x="0" y="111" width="156" height="12.5" fill="#d3d1cd"/><rect x="0" y="113" width="156" height="3" fill="#e2e0dc" opacity="0.7"/><rect x="0" y="123.5" width="156" height="2.5" fill="#55504a"/><rect x="-16.5" y="126.8" width="15" height="9.2" rx="1.5" fill="#cbc5bd"/><rect x="1.5" y="126.8" width="15" height="9.2" rx="1.5" fill="#cbc5bd"/><rect x="19.5" y="126.8" width="15" height="9.2" rx="1.5" fill="#cbc5bd"/><rect x="37.5" y="126.8" width="15" height="9.2" rx="1.5" fill="#cbc5bd"/><rect x="55.5" y="126.8" width="15" height="9.2" rx="1.5" fill="#cbc5bd"/><rect x="73.5" y="126.8" width="15" height="9.2" rx="1.5" fill="#cbc5bd"/><rect x="91.5" y="126.8" width="15" height="9.2" rx="1.5" fill="#cbc5bd"/><rect x="109.5" y="126.8" width="15" height="9.2" rx="1.5" fill="#cbc5bd"/><rect x="127.5" y="126.8" width="15" height="9.2" rx="1.5" fill="#cbc5bd"/><rect x="145.5" y="126.8" width="15" height="9.2" rx="1.5" fill="#cbc5bd"/><rect x="163.5" y="126.8" width="15" height="9.2" rx="1.5" fill="#cbc5bd"/><rect x="0" y="136" width="156" height="1.2" fill="#7a746c"/><rect x="-7.5" y="139.3" width="15" height="9.7" rx="1.5" fill="#cbc5bd"/><rect x="10.5" y="139.3" width="15" height="9.7" rx="1.5" fill="#cbc5bd"/><rect x="28.5" y="139.3" width="15" height="9.7" rx="1.5" fill="#cbc5bd"/><rect x="46.5" y="139.3" width="15" height="9.7" rx="1.5" fill="#cbc5bd"/><rect x="64.5" y="139.3" width="15" height="9.7" rx="1.5" fill="#cbc5bd"/><rect x="82.5" y="139.3" width="15" height="9.7" rx="1.5" fill="#cbc5bd"/><rect x="100.5" y="139.3" width="15" height="9.7" rx="1.5" fill="#cbc5bd"/><rect x="118.5" y="139.3" width="15" height="9.7" rx="1.5" fill="#cbc5bd"/><rect x="136.5" y="139.3" width="15" height="9.7" rx="1.5" fill="#cbc5bd"/><rect x="154.5" y="139.3" width="15" height="9.7" rx="1.5" fill="#cbc5bd"/><rect x="172.5" y="139.3" width="15" height="9.7" rx="1.5" fill="#cbc5bd"/><rect x="0" y="149.0" width="156" height="1.2" fill="#7a746c"/><rect x="-16.5" y="151.8" width="15" height="4.2" rx="1.5" fill="#cbc5bd"/><rect x="1.5" y="151.8" width="15" height="4.2" rx="1.5" fill="#cbc5bd"/><rect x="19.5" y="151.8" width="15" height="4.2" rx="1.5" fill="#cbc5bd"/><rect x="37.5" y="151.8" width="15" height="4.2" rx="1.5" fill="#cbc5bd"/><rect x="55.5" y="151.8" width="15" height="4.2" rx="1.5" fill="#cbc5bd"/><rect x="73.5" y="151.8" width="15" height="4.2" rx="1.5" fill="#cbc5bd"/><rect x="91.5" y="151.8" width="15" height="4.2" rx="1.5" fill="#cbc5bd"/><rect x="109.5" y="151.8" width="15" height="4.2" rx="1.5" fill="#cbc5bd"/><rect x="127.5" y="151.8" width="15" height="4.2" rx="1.5" fill="#cbc5bd"/><rect x="145.5" y="151.8" width="15" height="4.2" rx="1.5" fill="#cbc5bd"/><rect x="163.5" y="151.8" width="15" height="4.2" rx="1.5" fill="#cbc5bd"/><rect x="0" y="156" width="156" height="1.2" fill="#7a746c"/><path d="M-6 126 L-3 138 M3 138.5 L6 150 M-6 151 L-4 156" stroke="#6a645c" stroke-width="1.4"/><path d="M12 126 L15 138 M21 138.5 L24 150 M12 151 L14 156" stroke="#6a645c" stroke-width="1.4"/><path d="M30 126 L33 138 M39 138.5 L42 150 M30 151 L32 156" stroke="#6a645c" stroke-width="1.4"/><path d="M48 126 L51 138 M57 138.5 L60 150 M48 151 L50 156" stroke="#6a645c" stroke-width="1.4"/><path d="M66 126 L69 138 M75 138.5 L78 150 M66 151 L68 156" stroke="#6a645c" stroke-width="1.4"/><path d="M84 126 L87 138 M93 138.5 L96 150 M84 151 L86 156" stroke="#6a645c" stroke-width="1.4"/><path d="M102 126 L105 138 M111 138.5 L114 150 M102 151 L104 156" stroke="#6a645c" stroke-width="1.4"/><path d="M120 126 L123 138 M129 138.5 L132 150 M120 151 L122 156" stroke="#6a645c" stroke-width="1.4"/><path d="M138 126 L141 138 M147 138.5 L150 150 M138 151 L140 156" stroke="#6a645c" stroke-width="1.4"/><path d="M156 126 L159 138 M165 138.5 L168 150 M156 151 L158 156" stroke="#6a645c" stroke-width="1.4"/><path d="M41.3 0 H122.39999999999999 V138 Q122.39999999999999 153 108.39999999999999 153 H55.3 Q41.3 153 41.3 138 Z" fill="#e8e8e6"/><path d="M41.3 133 H122.39999999999999 V140 Q122.39999999999999 153 108.39999999999999 153 H55.3 Q41.3 153 41.3 140 Z" fill="#dededc"/><rect x="114.39999999999999" y="0" width="8" height="140" fill="#d9d9d7" opacity="0.6"/><path d="M41.3 8.4 H113.3 Q116.3 8.4 116.3 11.5 V131 Q81.3 134.5 41.3 133 Z" fill="url(#lg1)"/><path d="M41.3 8.4 H113.3 Q116.3 8.4 116.3 11.5 V131 Q81.3 134.5 41.3 133 Z" fill="url(#lh1)"/><path d="M41.3 126 Q81.3 131 116.3 127 V131 Q81.3 134.5 41.3 133 Z" fill="#164a6c"/><text x="82.6" y="23" font-family="Liberation Sans" font-size="11.8" fill="#1b4a6e" text-anchor="middle" textLength="31" lengthAdjust="spacingAndGlyphs">AURA</text><text x="82.6" y="31.4" font-family="Liberation Sans" font-size="9.4" fill="#1b4a6e" text-anchor="middle" textLength="39" lengthAdjust="spacingAndGlyphs">BOTANICS</text><text x="82.6" y="38.4" font-family="Liberation Sans" font-weight="700" font-size="4.6" fill="#1d3a4c" text-anchor="middle" textLength="40" lengthAdjust="spacingAndGlyphs">— REVITALIZE —</text><text x="82.6" y="43.8" font-family="Liberation Sans" font-weight="700" font-size="4.6" fill="#1d3a4c" text-anchor="middle" textLength="26" lengthAdjust="spacingAndGlyphs">SHAMPOO</text><rect x="56.8" y="47.0" width="4.4" height="1.25" fill="#22404e" opacity="0.42"/><rect x="62.3" y="47.0" width="8.8" height="1.25" fill="#22404e" opacity="0.42"/><rect x="72.1" y="47.0" width="3.8" height="1.25" fill="#22404e" opacity="0.42"/><rect x="77.0" y="47.0" width="7.2" height="1.25" fill="#22404e" opacity="0.42"/><rect x="85.3" y="47.0" width="3.5" height="1.25" fill="#22404e" opacity="0.42"/><rect x="89.9" y="47.0" width="4.5" height="1.25" fill="#22404e" opacity="0.42"/><rect x="95.5" y="47.0" width="9.0" height="1.25" fill="#22404e" opacity="0.42"/><rect x="105.6" y="47.0" width="3.7" height="1.25" fill="#22404e" opacity="0.42"/><rect x="56.8" y="50.1" width="6.9" height="1.25" fill="#22404e" opacity="0.42"/><rect x="64.8" y="50.1" width="5.8" height="1.25" fill="#22404e" opacity="0.42"/><rect x="71.6" y="50.1" width="5.7" height="1.25" fill="#22404e" opacity="0.42"/><rect x="78.4" y="50.1" width="6.0" height="1.25" fill="#22404e" opacity="0.42"/><rect x="85.5" y="50.1" width="4.2" height="1.25" fill="#22404e" opacity="0.42"/><rect x="90.7" y="50.1" width="8.0" height="1.25" fill="#22404e" opacity="0.42"/><rect x="99.8" y="50.1" width="3.5" height="1.25" fill="#22404e" opacity="0.42"/><rect x="104.5" y="50.1" width="4.4" height="1.25" fill="#22404e" opacity="0.42"/><rect x="56.8" y="53.3" width="3.1" height="1.25" fill="#22404e" opacity="0.42"/><rect x="61.0" y="53.3" width="4.6" height="1.25" fill="#22404e" opacity="0.42"/><rect x="66.7" y="53.3" width="5.4" height="1.25" fill="#22404e" opacity="0.42"/><rect x="73.3" y="53.3" width="8.4" height="1.25" fill="#22404e" opacity="0.42"/><rect x="82.8" y="53.3" width="5.3" height="1.25" fill="#22404e" opacity="0.42"/><rect x="89.2" y="53.3" width="3.7" height="1.25" fill="#22404e" opacity="0.42"/><rect x="93.9" y="53.3" width="4.6" height="1.25" fill="#22404e" opacity="0.42"/><rect x="99.6" y="53.3" width="8.9" height="1.25" fill="#22404e" opacity="0.42"/><rect x="56.8" y="56.5" width="3.4" height="1.25" fill="#22404e" opacity="0.42"/><rect x="61.3" y="56.5" width="6.7" height="1.25" fill="#22404e" opacity="0.42"/><rect x="69.1" y="56.5" width="5.3" height="1.25" fill="#22404e" opacity="0.42"/><rect x="75.5" y="56.5" width="7.0" height="1.25" fill="#22404e" opacity="0.42"/><rect x="83.5" y="56.5" width="5.0" height="1.25" fill="#22404e" opacity="0.42"/><rect x="89.7" y="56.5" width="7.1" height="1.25" fill="#22404e" opacity="0.42"/><rect x="97.9" y="56.5" width="6.0" height="1.25" fill="#22404e" opacity="0.42"/><rect x="105.0" y="56.5" width="4.3" height="1.25" fill="#22404e" opacity="0.42"/><rect x="56.8" y="59.6" width="8.4" height="1.25" fill="#22404e" opacity="0.42"/><rect x="66.3" y="59.6" width="6.5" height="1.25" fill="#22404e" opacity="0.42"/><rect x="73.9" y="59.6" width="3.9" height="1.25" fill="#22404e" opacity="0.42"/><rect x="78.9" y="59.6" width="3.4" height="1.25" fill="#22404e" opacity="0.42"/><rect x="83.3" y="59.6" width="8.7" height="1.25" fill="#22404e" opacity="0.42"/><rect x="93.1" y="59.6" width="5.9" height="1.25" fill="#22404e" opacity="0.42"/><rect x="100.1" y="59.6" width="4.2" height="1.25" fill="#22404e" opacity="0.42"/><rect x="105.4" y="59.6" width="3.9" height="1.25" fill="#22404e" opacity="0.42"/><rect x="56.8" y="62.8" width="6.5" height="1.25" fill="#22404e" opacity="0.42"/><rect x="64.4" y="62.8" width="7.4" height="1.25" fill="#22404e" opacity="0.42"/><rect x="72.8" y="62.8" width="8.3" height="1.25" fill="#22404e" opacity="0.42"/><rect x="82.2" y="62.8" width="4.7" height="1.25" fill="#22404e" opacity="0.42"/><rect x="88.0" y="62.8" width="5.1" height="1.25" fill="#22404e" opacity="0.42"/><rect x="94.3" y="62.8" width="8.3" height="1.25" fill="#22404e" opacity="0.42"/><rect x="103.7" y="62.8" width="3.8" height="1.25" fill="#22404e" opacity="0.42"/><rect x="108.6" y="62.8" width="0.7" height="1.25" fill="#22404e" opacity="0.42"/><rect x="56.8" y="65.9" width="3.6" height="1.25" fill="#22404e" opacity="0.42"/><rect x="61.5" y="65.9" width="7.1" height="1.25" fill="#22404e" opacity="0.42"/><rect x="69.7" y="65.9" width="7.2" height="1.25" fill="#22404e" opacity="0.42"/><rect x="78.0" y="65.9" width="8.7" height="1.25" fill="#22404e" opacity="0.42"/><rect x="87.8" y="65.9" width="8.1" height="1.25" fill="#22404e" opacity="0.42"/><rect x="97.0" y="65.9" width="6.0" height="1.25" fill="#22404e" opacity="0.42"/><rect x="104.1" y="65.9" width="4.2" height="1.25" fill="#22404e" opacity="0.42"/><rect x="56.8" y="69.0" width="3.9" height="1.25" fill="#22404e" opacity="0.42"/><rect x="61.8" y="69.0" width="6.2" height="1.25" fill="#22404e" opacity="0.42"/><rect x="69.1" y="69.0" width="6.1" height="1.25" fill="#22404e" opacity="0.42"/><rect x="76.2" y="69.0" width="3.4" height="1.25" fill="#22404e" opacity="0.42"/><rect x="80.8" y="69.0" width="8.4" height="1.25" fill="#22404e" opacity="0.42"/><rect x="90.3" y="69.0" width="6.0" height="1.25" fill="#22404e" opacity="0.42"/><rect x="97.4" y="69.0" width="3.9" height="1.25" fill="#22404e" opacity="0.42"/><rect x="56.699999999999996" y="75" width="54.2" height="54.2" fill="#eeeeec"/><rect x="61.3" y="78" width="0.9" height="29.5" fill="#161616"/><rect x="63.1" y="78" width="0.6" height="29.5" fill="#161616"/><rect x="65.0" y="78" width="1.8" height="29.5" fill="#161616"/><rect x="67.7" y="78" width="0.9" height="29.5" fill="#161616"/><rect x="69.2" y="78" width="0.6" height="29.5" fill="#161616"/><rect x="70.4" y="78" width="1.8" height="29.5" fill="#161616"/><rect x="73.5" y="78" width="1.2" height="29.5" fill="#161616"/><rect x="75.3" y="78" width="0.9" height="29.5" fill="#161616"/><rect x="77.5" y="78" width="2.2" height="29.5" fill="#161616"/><rect x="80.6" y="78" width="1.2" height="29.5" fill="#161616"/><rect x="82.4" y="78" width="0.6" height="29.5" fill="#161616"/><rect x="83.9" y="78" width="0.9" height="29.5" fill="#161616"/><rect x="85.4" y="78" width="1.2" height="29.5" fill="#161616"/><rect x="87.5" y="78" width="0.9" height="29.5" fill="#161616"/><rect x="89.0" y="78" width="1.2" height="29.5" fill="#161616"/><rect x="91.1" y="78" width="1.2" height="29.5" fill="#161616"/><rect x="92.9" y="78" width="2.2" height="29.5" fill="#161616"/><rect x="96.0" y="78" width="1.8" height="29.5" fill="#161616"/><rect x="99.1" y="78" width="0.9" height="29.5" fill="#161616"/><rect x="100.6" y="78" width="0.9" height="29.5" fill="#161616"/><rect x="102.4" y="78" width="1.2" height="29.5" fill="#161616"/><rect x="104.2" y="78" width="2.2" height="29.5" fill="#161616"/><text x="82.1" y="112.3" font-family="Liberation Sans" font-size="3.9" fill="#333" text-anchor="middle" textLength="42" lengthAdjust="spacingAndGlyphs">1 2345 67890</text><text x="62.3" y="121.5" font-family="Liberation Sans" font-weight="700" font-size="4.2" fill="#2a2a2a" textLength="36" lengthAdjust="spacingAndGlyphs">BATCH: AB240901</text><text x="62.3" y="127" font-family="Liberation Sans" font-weight="700" font-size="4.2" fill="#2a2a2a" textLength="24" lengthAdjust="spacingAndGlyphs">MFG: 08/24</text></g></svg></div>
<div class="a" style="left:1386px;top:237px;width:144px;height:156px;overflow:hidden"><svg width="144" height="156" viewBox="0 0 144 156" style="display:block"><defs><linearGradient id="lg2" x1="0" y1="0" x2="0" y2="1"><stop offset="0" stop-color="#7aa9c4"/><stop offset="0.3" stop-color="#90b9c6"/><stop offset="0.5" stop-color="#a0c8b6"/><stop offset="0.68" stop-color="#78ad9e"/><stop offset="0.86" stop-color="#3a7a88"/><stop offset="1" stop-color="#1c5578"/></linearGradient><linearGradient id="lh2" x1="0" y1="0" x2="1" y2="0"><stop offset="0" stop-color="#0e3a5a" stop-opacity="0.38"/><stop offset="0.25" stop-color="#0e3a5a" stop-opacity="0"/><stop offset="0.85" stop-color="#ffffff" stop-opacity="0"/><stop offset="1" stop-color="#0e3a5a" stop-opacity="0.2"/></linearGradient><filter id="bl2" x="0" y="0" width="1" height="1"><feGaussianBlur stdDeviation="0.45"/></filter></defs><g filter="url(#bl2)"><rect width="144" height="156" fill="#3a3937"/><rect x="0" y="0" width="31.3" height="112" fill="#3e3d39"/><rect x="3" y="22" width="24" height="52" fill="#5c5a55"/><rect x="5" y="74" width="20" height="18" fill="#6e6a64"/><rect x="26" y="35" width="5" height="76" fill="#6a665f"/><rect x="0" y="92" width="31.3" height="19" fill="#857e75"/><path d="M17 0 C15 12 16 21 24 26" stroke="#d8b43c" stroke-width="2.2" fill="none"/><path d="M4 0 C3 8 4 12 5 16" stroke="#cfae3a" stroke-width="1.8" fill="none"/><path d="M0 30 C6 30 12 31 19 31" stroke="#cfae3a" stroke-width="1.8" fill="none"/><rect x="117" y="0" width="27" height="112" fill="#4a4844"/><rect x="122" y="0" width="18" height="34" fill="#2a2a29"/><rect x="117" y="12" width="27" height="4" fill="#9a9894"/><rect x="117" y="34" width="27" height="12" fill="#a8a6a2"/><rect x="117" y="37" width="27" height="3.5" fill="#e0dedA"/><path d="M117 46 H144 V70 L124 50 Z" fill="#2a2927"/><rect x="117" y="98" width="27" height="12" fill="#a4a29e"/><rect x="117" y="101" width="27" height="3.5" fill="#dcdad6"/><path d="M124 110 L144 122" stroke="#6a8a50" stroke-width="2"/><rect x="0" y="111" width="144" height="45" fill="#bdb6ae"/><rect x="0" y="111" width="144" height="12.5" fill="#d3d1cd"/><rect x="0" y="113" width="144" height="3" fill="#e2e0dc" opacity="0.7"/><rect x="0" y="123.5" width="144" height="2.5" fill="#55504a"/><rect x="-16.5" y="126.8" width="15" height="9.2" rx="1.5" fill="#cbc5bd"/><rect x="1.5" y="126.8" width="15" height="9.2" rx="1.5" fill="#cbc5bd"/><rect x="19.5" y="126.8" width="15" height="9.2" rx="1.5" fill="#cbc5bd"/><rect x="37.5" y="126.8" width="15" height="9.2" rx="1.5" fill="#cbc5bd"/><rect x="55.5" y="126.8" width="15" height="9.2" rx="1.5" fill="#cbc5bd"/><rect x="73.5" y="126.8" width="15" height="9.2" rx="1.5" fill="#cbc5bd"/><rect x="91.5" y="126.8" width="15" height="9.2" rx="1.5" fill="#cbc5bd"/><rect x="109.5" y="126.8" width="15" height="9.2" rx="1.5" fill="#cbc5bd"/><rect x="127.5" y="126.8" width="15" height="9.2" rx="1.5" fill="#cbc5bd"/><rect x="145.5" y="126.8" width="15" height="9.2" rx="1.5" fill="#cbc5bd"/><rect x="0" y="136" width="144" height="1.2" fill="#7a746c"/><rect x="-7.5" y="139.3" width="15" height="9.7" rx="1.5" fill="#cbc5bd"/><rect x="10.5" y="139.3" width="15" height="9.7" rx="1.5" fill="#cbc5bd"/><rect x="28.5" y="139.3" width="15" height="9.7" rx="1.5" fill="#cbc5bd"/><rect x="46.5" y="139.3" width="15" height="9.7" rx="1.5" fill="#cbc5bd"/><rect x="64.5" y="139.3" width="15" height="9.7" rx="1.5" fill="#cbc5bd"/><rect x="82.5" y="139.3" width="15" height="9.7" rx="1.5" fill="#cbc5bd"/><rect x="100.5" y="139.3" width="15" height="9.7" rx="1.5" fill="#cbc5bd"/><rect x="118.5" y="139.3" width="15" height="9.7" rx="1.5" fill="#cbc5bd"/><rect x="136.5" y="139.3" width="15" height="9.7" rx="1.5" fill="#cbc5bd"/><rect x="154.5" y="139.3" width="15" height="9.7" rx="1.5" fill="#cbc5bd"/><rect x="0" y="149.0" width="144" height="1.2" fill="#7a746c"/><rect x="-16.5" y="151.8" width="15" height="4.2" rx="1.5" fill="#cbc5bd"/><rect x="1.5" y="151.8" width="15" height="4.2" rx="1.5" fill="#cbc5bd"/><rect x="19.5" y="151.8" width="15" height="4.2" rx="1.5" fill="#cbc5bd"/><rect x="37.5" y="151.8" width="15" height="4.2" rx="1.5" fill="#cbc5bd"/><rect x="55.5" y="151.8" width="15" height="4.2" rx="1.5" fill="#cbc5bd"/><rect x="73.5" y="151.8" width="15" height="4.2" rx="1.5" fill="#cbc5bd"/><rect x="91.5" y="151.8" width="15" height="4.2" rx="1.5" fill="#cbc5bd"/><rect x="109.5" y="151.8" width="15" height="4.2" rx="1.5" fill="#cbc5bd"/><rect x="127.5" y="151.8" width="15" height="4.2" rx="1.5" fill="#cbc5bd"/><rect x="145.5" y="151.8" width="15" height="4.2" rx="1.5" fill="#cbc5bd"/><rect x="0" y="156" width="144" height="1.2" fill="#7a746c"/><path d="M-6 126 L-3 138 M3 138.5 L6 150 M-6 151 L-4 156" stroke="#6a645c" stroke-width="1.4"/><path d="M12 126 L15 138 M21 138.5 L24 150 M12 151 L14 156" stroke="#6a645c" stroke-width="1.4"/><path d="M30 126 L33 138 M39 138.5 L42 150 M30 151 L32 156" stroke="#6a645c" stroke-width="1.4"/><path d="M48 126 L51 138 M57 138.5 L60 150 M48 151 L50 156" stroke="#6a645c" stroke-width="1.4"/><path d="M66 126 L69 138 M75 138.5 L78 150 M66 151 L68 156" stroke="#6a645c" stroke-width="1.4"/><path d="M84 126 L87 138 M93 138.5 L96 150 M84 151 L86 156" stroke="#6a645c" stroke-width="1.4"/><path d="M102 126 L105 138 M111 138.5 L114 150 M102 151 L104 156" stroke="#6a645c" stroke-width="1.4"/><path d="M120 126 L123 138 M129 138.5 L132 150 M120 151 L122 156" stroke="#6a645c" stroke-width="1.4"/><path d="M138 126 L141 138 M147 138.5 L150 150 M138 151 L140 156" stroke="#6a645c" stroke-width="1.4"/><path d="M156 126 L159 138 M165 138.5 L168 150 M156 151 L158 156" stroke="#6a645c" stroke-width="1.4"/><path d="M31.3 0 H112.39999999999999 V138 Q112.39999999999999 153 98.39999999999999 153 H45.3 Q31.3 153 31.3 138 Z" fill="#e8e8e6"/><path d="M31.3 133 H112.39999999999999 V140 Q112.39999999999999 153 98.39999999999999 153 H45.3 Q31.3 153 31.3 140 Z" fill="#dededc"/><rect x="104.39999999999999" y="0" width="8" height="140" fill="#d9d9d7" opacity="0.6"/><path d="M31.3 8.4 H103.3 Q106.3 8.4 106.3 11.5 V131 Q71.3 134.5 31.3 133 Z" fill="url(#lg2)"/><path d="M31.3 8.4 H103.3 Q106.3 8.4 106.3 11.5 V131 Q71.3 134.5 31.3 133 Z" fill="url(#lh2)"/><path d="M31.3 126 Q71.3 131 106.3 127 V131 Q71.3 134.5 31.3 133 Z" fill="#164a6c"/><text x="72.6" y="23" font-family="Liberation Sans" font-size="11.8" fill="#1b4a6e" text-anchor="middle" textLength="31" lengthAdjust="spacingAndGlyphs">AURA</text><text x="72.6" y="31.4" font-family="Liberation Sans" font-size="9.4" fill="#1b4a6e" text-anchor="middle" textLength="39" lengthAdjust="spacingAndGlyphs">BOTANICS</text><text x="72.6" y="38.4" font-family="Liberation Sans" font-weight="700" font-size="4.6" fill="#1d3a4c" text-anchor="middle" textLength="40" lengthAdjust="spacingAndGlyphs">— REVITALIZE —</text><text x="72.6" y="43.8" font-family="Liberation Sans" font-weight="700" font-size="4.6" fill="#1d3a4c" text-anchor="middle" textLength="26" lengthAdjust="spacingAndGlyphs">SHAMPOO</text><rect x="46.8" y="47.0" width="8.8" height="1.25" fill="#22404e" opacity="0.42"/><rect x="56.7" y="47.0" width="3.1" height="1.25" fill="#22404e" opacity="0.42"/><rect x="60.9" y="47.0" width="7.4" height="1.25" fill="#22404e" opacity="0.42"/><rect x="69.4" y="47.0" width="3.9" height="1.25" fill="#22404e" opacity="0.42"/><rect x="74.4" y="47.0" width="8.9" height="1.25" fill="#22404e" opacity="0.42"/><rect x="84.4" y="47.0" width="3.1" height="1.25" fill="#22404e" opacity="0.42"/><rect x="88.6" y="47.0" width="8.3" height="1.25" fill="#22404e" opacity="0.42"/><rect x="98.0" y="47.0" width="1.3" height="1.25" fill="#22404e" opacity="0.42"/><rect x="46.8" y="50.1" width="8.1" height="1.25" fill="#22404e" opacity="0.42"/><rect x="56.0" y="50.1" width="9.0" height="1.25" fill="#22404e" opacity="0.42"/><rect x="66.1" y="50.1" width="4.4" height="1.25" fill="#22404e" opacity="0.42"/><rect x="71.7" y="50.1" width="5.0" height="1.25" fill="#22404e" opacity="0.42"/><rect x="77.8" y="50.1" width="7.2" height="1.25" fill="#22404e" opacity="0.42"/><rect x="86.2" y="50.1" width="4.7" height="1.25" fill="#22404e" opacity="0.42"/><rect x="91.9" y="50.1" width="4.6" height="1.25" fill="#22404e" opacity="0.42"/><rect x="97.6" y="50.1" width="1.7" height="1.25" fill="#22404e" opacity="0.42"/><rect x="46.8" y="53.3" width="8.1" height="1.25" fill="#22404e" opacity="0.42"/><rect x="56.0" y="53.3" width="8.2" height="1.25" fill="#22404e" opacity="0.42"/><rect x="65.4" y="53.3" width="7.8" height="1.25" fill="#22404e" opacity="0.42"/><rect x="74.3" y="53.3" width="4.3" height="1.25" fill="#22404e" opacity="0.42"/><rect x="79.7" y="53.3" width="8.5" height="1.25" fill="#22404e" opacity="0.42"/><rect x="89.4" y="53.3" width="6.1" height="1.25" fill="#22404e" opacity="0.42"/><rect x="96.5" y="53.3" width="2.8" height="1.25" fill="#22404e" opacity="0.42"/><rect x="46.8" y="56.5" width="5.7" height="1.25" fill="#22404e" opacity="0.42"/><rect x="53.6" y="56.5" width="5.5" height="1.25" fill="#22404e" opacity="0.42"/><rect x="60.3" y="56.5" width="3.5" height="1.25" fill="#22404e" opacity="0.42"/><rect x="64.8" y="56.5" width="6.4" height="1.25" fill="#22404e" opacity="0.42"/><rect x="72.3" y="56.5" width="5.2" height="1.25" fill="#22404e" opacity="0.42"/><rect x="78.6" y="56.5" width="6.4" height="1.25" fill="#22404e" opacity="0.42"/><rect x="86.1" y="56.5" width="8.6" height="1.25" fill="#22404e" opacity="0.42"/><rect x="95.8" y="56.5" width="3.5" height="1.25" fill="#22404e" opacity="0.42"/><rect x="46.8" y="59.6" width="5.4" height="1.25" fill="#22404e" opacity="0.42"/><rect x="53.3" y="59.6" width="8.2" height="1.25" fill="#22404e" opacity="0.42"/><rect x="62.6" y="59.6" width="9.0" height="1.25" fill="#22404e" opacity="0.42"/><rect x="72.7" y="59.6" width="5.9" height="1.25" fill="#22404e" opacity="0.42"/><rect x="79.7" y="59.6" width="8.7" height="1.25" fill="#22404e" opacity="0.42"/><rect x="89.5" y="59.6" width="3.1" height="1.25" fill="#22404e" opacity="0.42"/><rect x="93.7" y="59.6" width="3.8" height="1.25" fill="#22404e" opacity="0.42"/><rect x="98.6" y="59.6" width="0.7" height="1.25" fill="#22404e" opacity="0.42"/><rect x="46.8" y="62.8" width="8.6" height="1.25" fill="#22404e" opacity="0.42"/><rect x="56.5" y="62.8" width="7.1" height="1.25" fill="#22404e" opacity="0.42"/><rect x="64.8" y="62.8" width="7.3" height="1.25" fill="#22404e" opacity="0.42"/><rect x="73.2" y="62.8" width="4.7" height="1.25" fill="#22404e" opacity="0.42"/><rect x="79.0" y="62.8" width="6.0" height="1.25" fill="#22404e" opacity="0.42"/><rect x="86.1" y="62.8" width="8.3" height="1.25" fill="#22404e" opacity="0.42"/><rect x="95.5" y="62.8" width="3.6" height="1.25" fill="#22404e" opacity="0.42"/><rect x="46.8" y="65.9" width="3.7" height="1.25" fill="#22404e" opacity="0.42"/><rect x="51.6" y="65.9" width="3.3" height="1.25" fill="#22404e" opacity="0.42"/><rect x="56.0" y="65.9" width="5.8" height="1.25" fill="#22404e" opacity="0.42"/><rect x="62.9" y="65.9" width="8.0" height="1.25" fill="#22404e" opacity="0.42"/><rect x="72.0" y="65.9" width="6.3" height="1.25" fill="#22404e" opacity="0.42"/><rect x="79.5" y="65.9" width="5.4" height="1.25" fill="#22404e" opacity="0.42"/><rect x="86.0" y="65.9" width="6.0" height="1.25" fill="#22404e" opacity="0.42"/><rect x="93.1" y="65.9" width="4.1" height="1.25" fill="#22404e" opacity="0.42"/><rect x="98.3" y="65.9" width="1.0" height="1.25" fill="#22404e" opacity="0.42"/><rect x="46.8" y="69.0" width="5.1" height="1.25" fill="#22404e" opacity="0.42"/><rect x="53.0" y="69.0" width="4.4" height="1.25" fill="#22404e" opacity="0.42"/><rect x="58.5" y="69.0" width="4.9" height="1.25" fill="#22404e" opacity="0.42"/><rect x="64.5" y="69.0" width="7.9" height="1.25" fill="#22404e" opacity="0.42"/><rect x="73.6" y="69.0" width="4.9" height="1.25" fill="#22404e" opacity="0.42"/><rect x="79.6" y="69.0" width="8.4" height="1.25" fill="#22404e" opacity="0.42"/><rect x="89.1" y="69.0" width="2.2" height="1.25" fill="#22404e" opacity="0.42"/><rect x="46.7" y="75" width="54.2" height="54.2" fill="#eeeeec"/><rect x="51.3" y="78" width="2.2" height="29.5" fill="#161616"/><rect x="54.4" y="78" width="1.2" height="29.5" fill="#161616"/><rect x="56.9" y="78" width="2.2" height="29.5" fill="#161616"/><rect x="59.7" y="78" width="1.8" height="29.5" fill="#161616"/><rect x="62.1" y="78" width="0.6" height="29.5" fill="#161616"/><rect x="63.3" y="78" width="0.6" height="29.5" fill="#161616"/><rect x="64.8" y="78" width="1.8" height="29.5" fill="#161616"/><rect x="67.2" y="78" width="1.8" height="29.5" fill="#161616"/><rect x="70.3" y="78" width="0.6" height="29.5" fill="#161616"/><rect x="72.2" y="78" width="0.9" height="29.5" fill="#161616"/><rect x="73.7" y="78" width="0.9" height="29.5" fill="#161616"/><rect x="75.5" y="78" width="1.2" height="29.5" fill="#161616"/><rect x="77.3" y="78" width="1.8" height="29.5" fill="#161616"/><rect x="79.7" y="78" width="0.6" height="29.5" fill="#161616"/><rect x="80.9" y="78" width="2.2" height="29.5" fill="#161616"/><rect x="84.4" y="78" width="1.8" height="29.5" fill="#161616"/><rect x="86.8" y="78" width="0.9" height="29.5" fill="#161616"/><rect x="88.3" y="78" width="0.6" height="29.5" fill="#161616"/><rect x="89.5" y="78" width="0.9" height="29.5" fill="#161616"/><rect x="91.0" y="78" width="0.9" height="29.5" fill="#161616"/><rect x="92.8" y="78" width="1.2" height="29.5" fill="#161616"/><rect x="94.6" y="78" width="2.2" height="29.5" fill="#161616"/><text x="72.1" y="112.3" font-family="Liberation Sans" font-size="3.9" fill="#333" text-anchor="middle" textLength="42" lengthAdjust="spacingAndGlyphs">1 2345 67890</text><text x="52.3" y="121.5" font-family="Liberation Sans" font-weight="700" font-size="4.2" fill="#2a2a2a" textLength="36" lengthAdjust="spacingAndGlyphs">BATCH: AB240901</text><text x="52.3" y="127" font-family="Liberation Sans" font-weight="700" font-size="4.2" fill="#2a2a2a" textLength="24" lengthAdjust="spacingAndGlyphs">MFG: 08/24</text></g></svg></div>
<div class="a" style="left:1050px;top:429px;width:159px;height:120px;background:#1e1e1e"></div>
<div class="a" style="left:1211px;top:429px;width:159px;height:120px;background:#1e1e1e"></div>
<div class="a" style="left:1371px;top:429px;width:159px;height:120px;background:#1e1e1e"></div>
<div class="t" style="left:1086.0px;top:466.8px;font-size:22px;line-height:22px;font-weight:700;letter-spacing:-1.45px;color:#f4f4f4;">98.1%</div>
<div class="t" style="left:1245.7px;top:466.8px;font-size:22px;line-height:22px;font-weight:700;letter-spacing:-0.55px;color:#f4f4f4;">7,332</div>
<div class="t" style="left:1407.7px;top:466.8px;font-size:22px;line-height:22px;font-weight:700;letter-spacing:-1.316px;color:#f4f4f4;">2.261 M</div>
<div class="t" style="left:1086.5px;top:499.8px;font-size:14px;line-height:14px;font-weight:400;letter-spacing:0.3px;color:#c4c4c4;-webkit-text-stroke:0.25px #c4c4c4;">YIELD</div>
<div class="t" style="left:1245.7px;top:499.8px;font-size:14px;line-height:14px;font-weight:400;letter-spacing:0.72px;color:#c4c4c4;-webkit-text-stroke:0.25px #c4c4c4;">FAILED</div>
<div class="t" style="left:1406.7px;top:499.8px;font-size:14px;line-height:14px;font-weight:400;letter-spacing:0.225px;color:#c4c4c4;-webkit-text-stroke:0.25px #c4c4c4;">ITEMS</div>
<div class="a" style="left:1050px;top:585px;width:480px;height:306px;background:#1e1e1e"></div>
<div class="t" style="left:1087.2px;top:619.8px;font-size:14px;line-height:14px;font-weight:400;letter-spacing:-0.008px;color:#d0d0d0;-webkit-text-stroke:0.35px #d0d0d0;">TOP 5 DEFECTS</div>
<svg class="a" style="left:1094px;top:664px" width="15" height="18" viewBox="0 0 15 18"><path d="M2 2.3 L7 7.6 L12 2.3 M2 10.1 L7 15.4 L12 10.1" stroke="#e8654f" stroke-width="2" fill="none" stroke-linecap="round" stroke-linejoin="round"/></svg>
<svg class="a" style="left:1094px;top:711px" width="15" height="10" viewBox="0 0 15 10"><path d="M2 2.5 L7 7.5 L12 2.5" stroke="#f2c14e" stroke-width="2" fill="none" stroke-linecap="round" stroke-linejoin="round"/></svg>
<svg class="a" style="left:1094px;top:748px" width="15" height="18" viewBox="0 0 15 18"><path d="M2 2.3 L7 7.6 L12 2.3 M2 10.1 L7 15.4 L12 10.1" stroke="#e8654f" stroke-width="2" fill="none" stroke-linecap="round" stroke-linejoin="round"/></svg>
<svg class="a" style="left:1094px;top:790px" width="15" height="18" viewBox="0 0 15 18"><path d="M2 2.3 L7 7.6 L12 2.3 M2 10.1 L7 15.4 L12 10.1" stroke="#e8654f" stroke-width="2" fill="none" stroke-linecap="round" stroke-linejoin="round"/></svg>
<svg class="a" style="left:1094px;top:837px" width="15" height="10" viewBox="0 0 15 10"><path d="M2 2.5 L7 7.5 L12 2.5" stroke="#f2c14e" stroke-width="2" fill="none" stroke-linecap="round" stroke-linejoin="round"/></svg>
<div class="t" style="left:1128.6px;top:661.0px;font-size:19px;line-height:19px;font-weight:400;letter-spacing:0.074px;color:#d2d2d2;">Missing lot code</div>
<div class="t" style="left:1128.7px;top:703.0px;font-size:19px;line-height:19px;font-weight:400;letter-spacing:-0.15px;color:#d2d2d2;">Wrinkled sleeve</div>
<div class="t" style="left:1127.7px;top:745.0px;font-size:19px;line-height:19px;font-weight:400;letter-spacing:0.267px;color:#d2d2d2;">Misaligned label</div>
<div class="t" style="left:1127.7px;top:787.0px;font-size:19px;line-height:19px;font-weight:400;letter-spacing:-0.101px;color:#d2d2d2;">Cap skew</div>
<div class="t" style="left:1127.7px;top:829.0px;font-size:19px;line-height:19px;font-weight:400;letter-spacing:0.4px;color:#d2d2d2;">Scuffing</div>
<div class="t" style="left:1439.6px;top:662.2px;font-size:19px;line-height:19px;font-weight:700;letter-spacing:1.825px;color:#f0f0f0;">1,411</div>
<div class="t" style="left:1462.2px;top:704.0px;font-size:19px;line-height:19px;font-weight:700;letter-spacing:-0.25px;color:#f0f0f0;">866</div>
<div class="t" style="left:1462.2px;top:746.0px;font-size:19px;line-height:19px;font-weight:700;letter-spacing:-0.25px;color:#f0f0f0;">645</div>
<div class="t" style="left:1462.2px;top:788.0px;font-size:19px;line-height:19px;font-weight:700;letter-spacing:-0.25px;color:#f0f0f0;">231</div>
<div class="t" style="left:1473.5px;top:829.8px;font-size:19px;line-height:19px;font-weight:700;letter-spacing:-0.4px;color:#f0f0f0;">76</div>
<div class="a" style="left:1050px;top:927px;width:228px;height:48px;box-sizing:border-box;background:#1e1e1e;border:2px solid #333333;border-radius:3px"></div>
<div class="a" style="left:1302px;top:927px;width:228px;height:48px;background:#1a62e0;border-radius:3px"></div>
<div class="t" style="left:1125.2px;top:944.3px;font-size:16px;line-height:16px;font-weight:400;letter-spacing:1.72px;color:#f4f4f4;-webkit-text-stroke:0.4px #f4f4f4;">MANAGE</div>
<div class="t" style="left:1394.7px;top:944.3px;font-size:16px;line-height:16px;font-weight:400;letter-spacing:0.367px;color:#f4f4f4;-webkit-text-stroke:0.4px #f4f4f4;">VIEW</div>
</body></html>
